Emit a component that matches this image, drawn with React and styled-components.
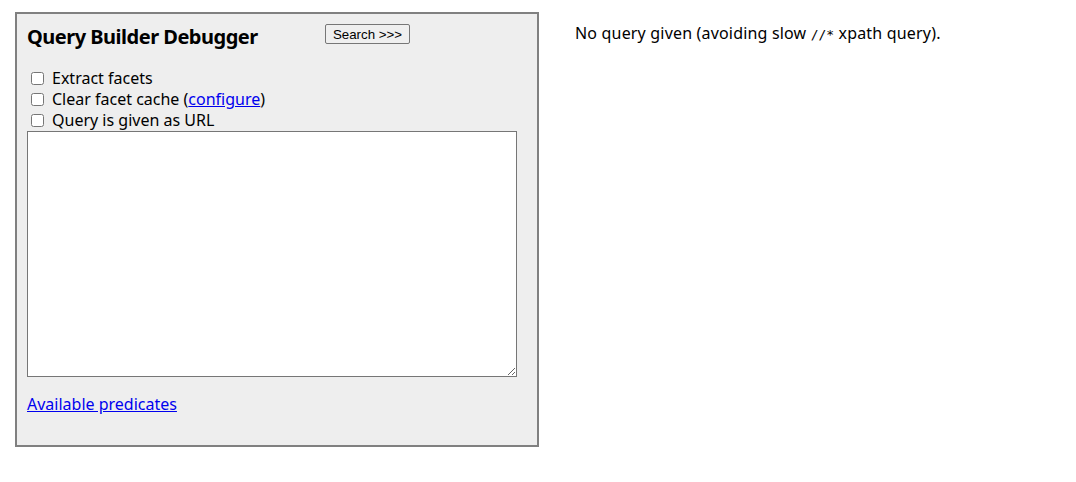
import React from "react";
import styled, { createGlobalStyle } from "styled-components";

const GlobalStyle = createGlobalStyle`
    body {
        margin: 0;
        background: #fff;
        font-family: "Noto Sans", "Open Sans", sans-serif;
        font-size: 16px;
        color: #000;
    }
`;

function App() {
    return (
        <>
            <GlobalStyle />
            <Page>
                <Panel>
                    <Header>
                        <Title>Query Builder Debugger</Title>
                        <SearchButton type="button">Search &gt;&gt;&gt;</SearchButton>
                    </Header>
                    <Options>
                        <Option>
                            <Check type="checkbox" />
                            Extract facets
                        </Option>
                        <Option>
                            <Check type="checkbox" />
                            Clear facet cache (<Link href="#">configure</Link>)
                        </Option>
                        <Option>
                            <Check type="checkbox" />
                            Query is given as URL
                        </Option>
                    </Options>
                    <QueryBox />
                    <Footer>
                        <Link href="#">Available predicates</Link>
                    </Footer>
                </Panel>
                <Result>
                    No query given (avoiding slow <Code>//*</Code> xpath query).
                </Result>
            </Page>
        </>
    );
}

export default App;

const Page = styled.div`
    display: flex;
    align-items: flex-start;
    gap: 36px;
    padding: 12px 0 0 15px;
`;

const Panel = styled.div`
    box-sizing: border-box;
    width: 524px;
    height: 435px;
    border: 2px solid #808080;
    background-color: #eeeeee;
    padding: 10px 20px 10px 10px;
    display: flex;
    flex-direction: column;
`;

const Header = styled.div`
    display: flex;
    align-items: flex-start;
    height: 44px;
`;

const Title = styled.h1`
    margin: 0;
    width: 298px;
    font-size: 20px;
    font-weight: 700;
    line-height: 26px;
    letter-spacing: -0.5px;
`;

const SearchButton = styled.button`
    box-sizing: border-box;
    height: 20px;
    width: 85px;
    padding: 0 6px;
    font-family: "Liberation Sans", Arial, sans-serif;
    font-size: 13.3px;
    color: #000;
    background-color: #efefef;
    border: 1px solid #767676;
    border-radius: 2px;
`;

const Options = styled.div`
    display: flex;
    flex-direction: column;
`;

const Option = styled.label`
    display: flex;
    align-items: center;
    height: 21px;
    line-height: 21px;
    white-space: pre;
`;

const Check = styled.input`
    width: 13px;
    height: 13px;
    margin: 0 8px 0 4px;
`;

const Link = styled.a`
    color: #0000ee;
    text-decoration: underline;
`;

const QueryBox = styled.textarea`
    box-sizing: border-box;
    width: 490px;
    height: 246px;
    margin: 0;
    border: 1px solid #767676;
    background: #fff;
    resize: vertical;
`;

const Footer = styled.div`
    margin-top: 17px;
    line-height: 21px;
`;

const Result = styled.p`
    margin: 11px 0 0;
    line-height: 21px;
    letter-spacing: 0.18px;
`;

const Code = styled.code`
    font-family: "DejaVu Sans Mono", monospace;
    font-size: 13px;
    letter-spacing: 0;
`;
